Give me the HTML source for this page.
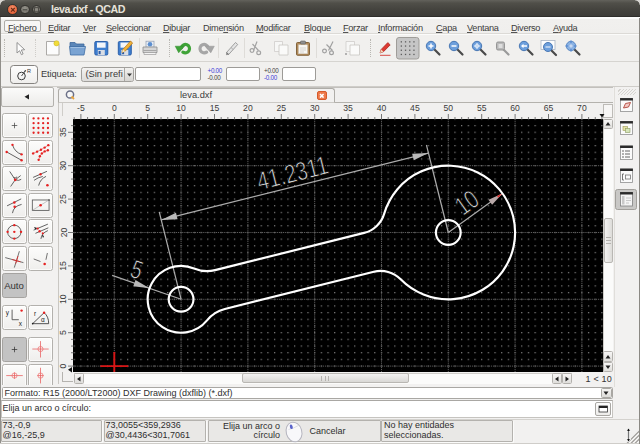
<!DOCTYPE html>
<html lang="es">
<head>
<meta charset="utf-8">
<title>leva.dxf - QCAD</title>
<style>
*{box-sizing:border-box;margin:0;padding:0}
html,body{width:640px;height:444px;overflow:hidden}
body{position:relative;background:#f2f1f0;font-family:"Liberation Sans",sans-serif;font-size:9px;color:#3c3c3c}
#cornl,#cornr{position:absolute;top:0;width:5px;height:5px}
.abs{position:absolute}
#title{left:0;top:0;width:640px;height:17px;background:linear-gradient(#63625c 0,#504f49 3px,#45443f 9px,#3d3c38 100%);border-bottom:1px solid #2f2e2b}
#title .t{position:absolute;left:51px;top:3px;font:bold 10.700px "Liberation Sans",sans-serif;color:#e6e2da;white-space:nowrap;letter-spacing:-.45px}
.wb{position:absolute;border-radius:50%;border:1px solid #33322e;margin-top:-.3px}
#menubar{left:0;top:17px;width:640px;height:17px;background:linear-gradient(#fdfdfd 0,#fbfbfa 1.5px,#f1f0ee 2.5px,#f0efed 100%);border-bottom:1px solid #dcdad6}
#menubar span{position:absolute;top:5.600px;font-size:9.200px;color:#3c3c3c;white-space:nowrap;font-family:"Liberation Sans",sans-serif;letter-spacing:-.3px}
#menubar span u{text-decoration-thickness:.6px;text-underline-offset:1.200px;text-decoration-color:#555}
#toolbar{left:0;top:34px;width:640px;height:28px;background:#f1f0ee;border-top:1px solid #fbfbfa;border-bottom:1px solid #d6d4d0}
#optbar{left:0;top:62px;width:640px;height:24.500px;background:#f1f0ee;border-bottom:1px solid #cfcdc9}
.hdl{position:absolute;width:2px;border-left:1.5px dotted #b9b7b2}
.sep{position:absolute;width:1px;background:#dedcd8}
.ico{position:absolute}
.fld{position:absolute;top:67px;height:14px;background:#fff;border:1px solid #9d9b97;border-radius:2px}
.pm{position:absolute;font-size:6.3px;line-height:6.5px;letter-spacing:-.3px;white-space:nowrap}
.tb{position:absolute;width:25px;height:25px;border:1px solid #b3b1ad;border-radius:2.5px;background:linear-gradient(#fcfcfb,#efeeec);box-shadow:inset 0 0 0 1px rgba(255,255,255,.7)}
.tb.on{background:#c3c3c3;border-color:#a5a3a0;box-shadow:none}
.tb svg{position:absolute;left:0;top:0}
#left{left:0;top:87px;width:57px;height:298px;overflow:hidden;background:#f2f1f0}
.cell{position:absolute;top:420px;height:22px;background:#e9e8e6;border:1px solid #b4b2ae;border-radius:1px;box-shadow:1px 1px 0 #fbfbfa}
.st{position:absolute;font:9px/10px "Liberation Sans",sans-serif;white-space:nowrap;color:#2e2e2e}
svg text{font-family:"Liberation Sans",sans-serif}
.rul text{font-size:8.6px;fill:#3a3a3a}
.sb{position:absolute;background:linear-gradient(#f7f6f5,#dfdedb);border:1px solid #b3b1ad;border-radius:1.500px}
.sb svg{position:absolute;left:0;top:.500px}
</style>
</head>
<body>
<!-- ===== title bar ===== -->
<div id="title" class="abs">
  <div class="wb" style="left:7.300px;top:4.200px;width:11.200px;height:11.200px;background:radial-gradient(circle at 50% 35%,#f6906a,#dd4f24)"></div>
  <div class="wb" style="left:20.200px;top:5px;width:9.600px;height:9.600px;background:radial-gradient(circle at 50% 35%,#94928a,#6c6a63)"></div>
  <div class="wb" style="left:31.700px;top:5px;width:9.600px;height:9.600px;background:radial-gradient(circle at 50% 35%,#94928a,#6c6a63)"></div>
  <svg class="abs" style="left:0;top:0" width="60" height="18" viewBox="0 0 60 18"><path d="M11.100 8l3.600 3.600m0-3.600l-3.600 3.600" stroke="#6b2a14" stroke-width="1.200" fill="none"/><path d="M22.800 9.800h4.400" stroke="#45443f" stroke-width="1.100"/><rect x="34.400" y="7.700" width="4.200" height="4.200" fill="none" stroke="#45443f" stroke-width="1"/></svg>
  <div class="t">leva.dxf - QCAD</div>
  <div id="cornl" style="left:0;background:radial-gradient(circle at 100% 100%,rgba(0,0,0,0) 4.200px,#d9d7d3 5px)"></div>
  <div id="cornr" style="right:0;background:radial-gradient(circle at 0 100%,rgba(0,0,0,0) 4.200px,#d9d7d3 5px)"></div>
</div>
<!-- ===== menu bar ===== -->
<div id="menubar" class="abs">
  <div class="abs" style="left:3.500px;top:3px;width:37px;height:12px;border:1px solid #aeaca7;border-radius:2px;background:#f7f6f5"></div>
  <span style="left:8px"><u>F</u>ichero</span>
  <span style="left:48px"><u>E</u>ditar</span>
  <span style="left:83px"><u>V</u>er</span>
  <span style="left:106px"><u>S</u>eleccionar</span>
  <span style="left:163px"><u>D</u>ibujar</span>
  <span style="left:203px">Dime<u>n</u>sión</span>
  <span style="left:256px"><u>M</u>odificar</span>
  <span style="left:304px"><u>B</u>loque</span>
  <span style="left:343px"><u>F</u>orzar</span>
  <span style="left:378px"><u>I</u>nformación</span>
  <span style="left:436px"><u>C</u>apa</span>
  <span style="left:467px"><u>V</u>entana</span>
  <span style="left:511px"><u>D</u>iverso</span>
  <span style="left:553px"><u>A</u>yuda</span>
</div>
<!-- ===== main toolbar ===== -->
<div id="toolbar" class="abs"></div>
<div class="hdl" style="left:4px;top:39px;height:18px"></div>
<div class="hdl" style="left:35px;top:39px;height:18px;opacity:.6"></div>
<div class="hdl" style="left:168.500px;top:39px;height:18px"></div>
<div class="sep" style="left:139px;top:38px;height:20px"></div>
<div class="sep" style="left:218px;top:38px;height:20px"></div>
<div class="sep" style="left:244px;top:38px;height:20px"></div>
<div class="sep" style="left:315.500px;top:38px;height:20px"></div>
<div class="hdl" style="left:370px;top:39px;height:18px"></div>
<svg class="ico" style="left:0;top:34px" width="640" height="28" viewBox="0 34 640 28">
  <!-- pointer -->
  <path d="M17 42.500v10.500l2.600-2.300 1.800 4 1.700-.8-1.800-3.900 3.400-.300z" fill="#fdfdfd" stroke="#8a8a8a" stroke-width=".9" stroke-linejoin="round"/>
  <!-- new -->
  <path d="M46.500 41.500h9.500l3 3v10.500h-12.500z" fill="#fcfcfc" stroke="#a4a29e" stroke-width=".9"/>
  <path d="M47.500 54.500h10.500" stroke="#d8d6d2" stroke-width="1"/>
  <circle cx="56.500" cy="43.300" r="2.600" fill="#f1dc3a" stroke="#c9b11b" stroke-width=".5"/>
  <!-- open -->
  <path d="M70 42.500h5l1.500 1.500h7.500v3h-14z" fill="#5b86b8" stroke="#3d689c" stroke-width=".8"/>
  <path d="M69.500 46.500h16l-1.500 8.500h-13.500z" fill="#7aa3d2" stroke="#3f6da4" stroke-width=".8"/>
  <path d="M70.500 47.500h14" stroke="#a9c6e6" stroke-width=".8"/>
  <!-- save -->
  <rect x="94.800" y="41.500" width="13" height="13.500" rx="1.200" fill="#3f7fd0" stroke="#2458a4" stroke-width=".9"/>
  <rect x="97" y="42.500" width="8.600" height="5.200" fill="#f4f6fa"/>
  <rect x="97.800" y="50" width="7" height="5" fill="#d9dde4"/><rect x="98.600" y="51" width="2" height="3.200" fill="#2a5aa6"/>
  <!-- save as -->
  <rect x="118.300" y="41.500" width="13" height="13.500" rx="1.200" fill="#3f7fd0" stroke="#2458a4" stroke-width=".9"/>
  <rect x="120.500" y="42.500" width="8.600" height="5.200" fill="#f4f6fa"/>
  <rect x="121.300" y="50" width="7" height="5" fill="#d9dde4"/><rect x="122.100" y="51" width="2" height="3.200" fill="#2a5aa6"/>
  <path d="M122 52.500l1-3.200 7.500-8.300 2.200 2-7.600 8.300z" fill="#f0b23a" stroke="#b87616" stroke-width=".7"/>
  <path d="M122 52.500l1-3.200 2.100 2.200z" fill="#f6e6c8"/>
  <!-- print -->
  <rect x="146" y="41.200" width="8" height="6" fill="#e9eef5" stroke="#8e9bb0" stroke-width=".7"/>
  <circle cx="150" cy="44.300" r="2.300" fill="#5c8fd0"/>
  <path d="M143 47h14v5.500h-14z" fill="#d6d6d6" stroke="#8b8b8b" stroke-width=".8"/>
  <path d="M144 52.500h12v2h-12z" fill="#f4f4f4" stroke="#9b9b9b" stroke-width=".7"/>
  <path d="M143.500 50.500h13" stroke="#9a9a9a" stroke-width=".8"/>
  <!-- undo -->
  <path d="M181.300 47.500a4.200 4.200 0 1 1 1.600 4.600" fill="none" stroke="#3fa338" stroke-width="3.200" stroke-linecap="round"/>
  <path d="M175.200 46.200h9.300l-5.800 6.600z" fill="#3fa338" stroke="#2f8a2a" stroke-width=".5" stroke-linejoin="round"/>
  <!-- redo -->
  <path d="M208.200 47.500a4.200 4.200 0 1 0 -1.600 4.600" fill="none" stroke="#a6a6a6" stroke-width="3.200" stroke-linecap="round"/>
  <path d="M214.300 46.200h-9.300l5.800 6.600z" fill="#a6a6a6" stroke="#949494" stroke-width=".5" stroke-linejoin="round"/>
  <!-- ruler / measure -->
  <path d="M226.500 52.500l9-10 2.200 2-9 10z" fill="#e4e4e4" stroke="#8c8c8c" stroke-width=".8"/>
  <path d="M229 54.200l-2.600 .600 .300-2.600" fill="#777" stroke="#777" stroke-width=".5"/>
  <path d="M231 47.500l2.200 2" stroke="#9a9a9a" stroke-width=".7"/>
  <!-- scissors (disabled) -->
  <g stroke="#a3a3a3" fill="none" stroke-width="1.200">
    <path d="M257 41.500l-3.500 9M252.500 44l6 6.500"/>
    <circle cx="252" cy="50.500" r="1.900"/><circle cx="258.700" cy="52.800" r="1.900"/>
  </g>
  <!-- copy (disabled) -->
  <path d="M274.500 41.500h8v10h-8z" fill="#f7f7f6" stroke="#cfcdca" stroke-width=".8"/>
  <path d="M279 45h9v10h-9z" fill="#fafaf9" stroke="#c9c7c3" stroke-width=".8"/>
  <!-- paste -->
  <rect x="296.500" y="42.500" width="13" height="12.800" rx="1" fill="#b08a5a" stroke="#7b5a31" stroke-width=".9"/>
  <rect x="298.500" y="44.800" width="9" height="9" fill="#f7f6f3" stroke="#c9c2b4" stroke-width=".5"/>
  <rect x="300.500" y="41" width="5" height="3" rx=".8" fill="#8f8f8f" stroke="#5e5e5e" stroke-width=".6"/>
  <path d="M300 48h6M300 50h6M300 52h4" stroke="#c3c0b8" stroke-width=".6"/>
  <!-- scissors 2 (disabled) -->
  <g stroke="#a0a0a0" fill="none" stroke-width="1.200">
    <path d="M333 41.500l-4.500 9M326.500 44.500l6 6"/>
    <circle cx="324.500" cy="51" r="1.900"/><circle cx="331.500" cy="52.800" r="1.900"/>
  </g>
  <!-- copy 2 (disabled) -->
  <path d="M346 41.500h8.500v10h-8.500z" fill="#f7f7f6" stroke="#cfcdca" stroke-width=".8"/>
  <path d="M350 45h9.500v10h-9.500z" fill="#fafaf9" stroke="#c9c7c3" stroke-width=".8"/>
  <circle cx="346" cy="54" r="1" fill="#9c9c9c"/>
  <!-- red pencil -->
  <path d="M380 53l1.200-3.600 6.600-6.800 2.400 2.300-6.700 6.800z" fill="#dc3a32" stroke="#a81e19" stroke-width=".7"/>
  <path d="M380 53l1.200-3.600 2.300 2.300z" fill="#f0d9b8"/>
  <path d="M380 55.300h10.500" stroke="#d64a44" stroke-width="1"/>
  <!-- grid button (pressed) -->
  <rect x="396.500" y="37.500" width="22.500" height="21.500" rx="2.500" fill="#c6c6c6" stroke="#9f9d99" stroke-width="1"/>
  <g fill="#5d5d5d">
    <rect x="400.700" y="41.200" width="1.300" height="1.300"/><rect x="404.900" y="41.200" width="1.300" height="1.300"/><rect x="409.100" y="41.200" width="1.300" height="1.300"/><rect x="413.300" y="41.200" width="1.300" height="1.300"/>
    <rect x="400.700" y="45.400" width="1.300" height="1.300"/><rect x="404.900" y="45.400" width="1.300" height="1.300"/><rect x="409.100" y="45.400" width="1.300" height="1.300"/><rect x="413.300" y="45.400" width="1.300" height="1.300"/>
    <rect x="400.700" y="49.600" width="1.300" height="1.300"/><rect x="404.900" y="49.600" width="1.300" height="1.300"/><rect x="409.100" y="49.600" width="1.300" height="1.300"/><rect x="413.300" y="49.600" width="1.300" height="1.300"/>
    <rect x="400.700" y="53.800" width="1.300" height="1.300"/><rect x="404.900" y="53.800" width="1.300" height="1.300"/><rect x="409.100" y="53.800" width="1.300" height="1.300"/><rect x="413.300" y="53.800" width="1.300" height="1.300"/>
  </g>
  <!-- zoom icons -->
  <g id="zi">
    <g><path d="M434.500 49.500l5 5" stroke="#4a4a4a" stroke-width="2.200" stroke-linecap="round"/><circle cx="431" cy="46" r="4.700" fill="#6d9fdc" stroke="#3f6fae" stroke-width=".9"/><path d="M428.500 46h5M431 43.500v5" stroke="#fff" stroke-width="1.500"/></g>
    <g><path d="M457.500 49.500l5 5" stroke="#4a4a4a" stroke-width="2.200" stroke-linecap="round"/><circle cx="454" cy="46" r="4.700" fill="#6d9fdc" stroke="#3f6fae" stroke-width=".9"/><path d="M451.500 46h5" stroke="#fff" stroke-width="1.500"/></g>
    <g><path d="M480.500 49.500l5 5" stroke="#4a4a4a" stroke-width="2.200" stroke-linecap="round"/><circle cx="477" cy="46" r="4.700" fill="#6d9fdc" stroke="#3f6fae" stroke-width=".9"/><path d="M474 46h6M477 43v6" stroke="#e8f0fa" stroke-width="1"/><circle cx="477" cy="46" r="1.800" fill="none" stroke="#e8f0fa" stroke-width=".8"/></g>
    <g><path d="M503.500 49.500l5 5" stroke="#9a9a9a" stroke-width="2.200" stroke-linecap="round"/><rect x="496.500" y="42" width="8" height="8" rx="1.500" fill="#b9b9b9" stroke="#8e8e8e" stroke-width=".9"/><rect x="498.500" y="44" width="4" height="4" fill="#dedede"/></g>
    <g><path d="M527.500 49.500l5 5" stroke="#4a4a4a" stroke-width="2.200" stroke-linecap="round"/><circle cx="524" cy="46" r="4.700" fill="#6d9fdc" stroke="#3f6fae" stroke-width=".9"/><path d="M521 46l2.500-2.200v1.400h3.500v1.600h-3.500v1.400z" fill="#fff"/></g>
    <g><rect x="541" y="40.500" width="14" height="9" fill="#fdfdfd" stroke="#a9b4c4" stroke-width=".8"/><path d="M551.500 50.500l4.500 4.500" stroke="#4a4a4a" stroke-width="2.200" stroke-linecap="round"/><circle cx="548" cy="47" r="4.500" fill="#6d9fdc" stroke="#3f6fae" stroke-width=".9"/><path d="M545.500 47h5" stroke="#dbe7f6" stroke-width="1.300"/></g>
    <g><path d="M574.500 49.500l5 5" stroke="#4a4a4a" stroke-width="2.200" stroke-linecap="round"/><circle cx="571" cy="46" r="4.700" fill="#8bb3e4" stroke="#4f7fbe" stroke-width=".9"/><path d="M565.500 46h11M571 40.500v11" stroke="#5d8fd2" stroke-width="1.500"/><path d="M568.500 46h5M571 43.500v5" stroke="#eaf1fa" stroke-width="1"/></g>
  </g>
</svg>

<!-- ===== options bar ===== -->
<div id="optbar" class="abs"></div>
<div class="abs" style="left:10px;top:65px;width:27.500px;height:19px;border:1.300px solid #858380;border-radius:3.500px;background:linear-gradient(#fdfdfd,#efeeec)"></div>
<svg class="ico" style="left:10px;top:64px" width="28" height="21" viewBox="10 64 28 21">
  <circle cx="21.500" cy="76" r="3.800" fill="none" stroke="#3a3a3a" stroke-width="1"/>
  <path d="M21.500 76l4.300-5.800" stroke="#3a3a3a" stroke-width=".9"/>
  <path d="M25.800 70.200l-2 .9 1.400 1z" fill="#3a3a3a"/>
  <text x="27" y="73" font-size="5.500" fill="#333" font-family="Liberation Sans,sans-serif">R</text>
</svg>
<div class="abs" style="left:41px;top:68.500px;font:9.300px 'Liberation Sans',sans-serif;letter-spacing:-.1px;white-space:nowrap">Etiqueta:</div>
<div class="abs" style="left:81px;top:67px;width:53px;height:14.500px;border:1px solid #a19f9b;border-radius:2.500px;background:linear-gradient(#f4f3f2,#dddcda);overflow:hidden">
  <div class="abs" style="left:3.500px;top:1px;font:9.300px 'Liberation Sans',sans-serif;white-space:nowrap;color:#3a3a3a">(Sin prefi</div>
  <div class="abs" style="left:42px;top:0;width:10px;height:13px;border-left:1px solid #a9a7a3;background:linear-gradient(#f2f1ef,#d6d5d2)"></div>
  <svg class="abs" style="left:43px;top:0" width="9" height="13" viewBox="0 0 9 13"><path d="M2 5.500h5l-2.500 3z" fill="#3a3a3a"/></svg>
</div>
<div class="fld" style="left:135px;width:66px"></div>
<div class="pm" style="left:207.500px;top:68.300px"><span style="color:#3b3bd8">+0.00</span><br><span style="color:#444">-0.00</span></div>
<div class="fld" style="left:226px;width:33.500px"></div>
<div class="pm" style="left:264px;top:68.300px"><span style="color:#444">+0.00</span><br><span style="color:#3b3bd8">-0.00</span></div>
<div class="fld" style="left:281.500px;width:34px"></div>

<!-- ===== left tool panel ===== -->
<div id="left" class="abs">
  <div class="abs" style="left:1px;top:-.500px;width:53px;height:20px;border:1px solid #b3b1ad;border-radius:2px;background:linear-gradient(#fbfbfa,#ecebe9)"></div>
  <svg class="abs" style="left:22px;top:5px" width="10" height="10" viewBox="0 0 10 10"><path d="M2.500 4.800l4.500-2.600v5.200z" fill="#222"/></svg>
  <!-- row 1 -->
  <div class="tb" style="left:1.5px;top:26px"><svg width="23" height="23" viewBox="0 0 25 25"><path d="M9.500 12.500h6M12.500 9.500v6" stroke="#444" stroke-width=".8"/></svg></div>
  <div class="tb" style="left:28px;top:26px"><svg width="23" height="23" viewBox="0 0 25 25"><g fill="#e62222"><circle cx="5" cy="4.800" r="1.250"/><circle cx="10.200" cy="4.800" r="1.250"/><circle cx="15.400" cy="4.800" r="1.250"/><circle cx="20.600" cy="4.800" r="1.250"/><circle cx="5" cy="10" r="1.250"/><circle cx="10.200" cy="10" r="1.250"/><circle cx="15.400" cy="10" r="1.250"/><circle cx="20.600" cy="10" r="1.250"/><circle cx="5" cy="15.200" r="1.250"/><circle cx="10.200" cy="15.200" r="1.250"/><circle cx="15.400" cy="15.200" r="1.250"/><circle cx="20.600" cy="15.200" r="1.250"/><circle cx="5" cy="20.400" r="1.250"/><circle cx="10.200" cy="20.400" r="1.250"/><circle cx="15.400" cy="20.400" r="1.250"/><circle cx="20.600" cy="20.400" r="1.250"/></g></svg></div>
  <!-- row 2 -->
  <div class="tb" style="left:1.5px;top:52.6px"><svg width="23" height="23" viewBox="0 0 25 25"><path d="M10.300 4.200q2.500 8 9.900 10.300M4 11.900l16.200 9.100" stroke="#444" stroke-width=".9" fill="none"/><g fill="#e62222"><circle cx="10.300" cy="4.200" r="1.300"/><circle cx="20.200" cy="14.500" r="1.300"/><circle cx="4" cy="11.900" r="1.300"/><circle cx="20.200" cy="21" r="1.300"/></g></svg></div>
  <div class="tb" style="left:28px;top:52.6px"><svg width="23" height="23" viewBox="0 0 25 25"><path d="M4.500 13.500q8-3 16.500-9M10.500 20.500q1.500-8 10-10.500" stroke="#e05050" stroke-width=".7" fill="none"/><g fill="#e62222"><circle cx="4.500" cy="13.500" r="1.300"/><circle cx="8.800" cy="11.600" r="1.300"/><circle cx="13" cy="9.500" r="1.300"/><circle cx="17" cy="7.200" r="1.300"/><circle cx="21" cy="4.500" r="1.300"/><circle cx="10.500" cy="20.500" r="1.300"/><circle cx="11.800" cy="16.500" r="1.300"/><circle cx="14" cy="13.500" r="1.300"/><circle cx="17" cy="11.300" r="1.300"/><circle cx="20.500" cy="10" r="1.300"/></g></svg></div>
  <!-- row 3 -->
  <div class="tb" style="left:1.5px;top:79.1px"><svg width="23" height="23" viewBox="0 0 25 25"><path d="M7.300 4.800l6 9.100 5.900-4.600M13.300 13.900l-5 7.300M13.300 13.900q4 1.500 6.500-.5M11.500 11.500q1.800 1 3.800-.7" stroke="#444" stroke-width=".9" fill="none"/><circle cx="13.300" cy="13.900" r="1.500" fill="#e62222"/></svg></div>
  <div class="tb" style="left:28px;top:79.1px"><svg width="23" height="23" viewBox="0 0 25 25"><path d="M4.500 11.300l15-6.600M10.500 20.200q1.500-7 8-10M5.500 14.500q4-3.200 9.500-4.200" stroke="#444" stroke-width=".9" fill="none"/><circle cx="12.500" cy="7.900" r="1.300" fill="#e62222"/><circle cx="20" cy="19.800" r="1.400" fill="#e62222"/></svg></div>
  <!-- row 4 -->
  <div class="tb" style="left:1.5px;top:105.7px"><svg width="23" height="23" viewBox="0 0 25 25"><path d="M4.400 12.900l15.400-7.600M10.300 20.800q1-7.500 9.900-9.500" stroke="#444" stroke-width=".9" fill="none"/><circle cx="12.300" cy="9.300" r="1.400" fill="#e62222"/><circle cx="12.700" cy="13.900" r="1.400" fill="#e62222"/></svg></div>
  <div class="tb" style="left:28px;top:105.7px"><svg width="23" height="23" viewBox="0 0 25 25"><rect x="3.600" y="6.500" width="18.200" height="11.300" fill="none" stroke="#555" stroke-width=".9"/><path d="M3.600 17.800l18.200-11.300" stroke="#9a9a9a" stroke-width=".6"/><circle cx="12.600" cy="12.300" r="1.400" fill="#e62222"/><circle cx="21.800" cy="6.500" r=".8" fill="#333"/></svg></div>
  <!-- row 5 -->
  <div class="tb" style="left:1.5px;top:132.2px"><svg width="23" height="23" viewBox="0 0 25 25"><circle cx="12.300" cy="12.900" r="7.300" fill="none" stroke="#444" stroke-width=".9"/><g fill="#e62222"><circle cx="12.300" cy="12.900" r="1.300"/><circle cx="12.300" cy="5.600" r="1.300"/><circle cx="12.300" cy="20.200" r="1.300"/><circle cx="5" cy="12.900" r="1.300"/><circle cx="19.600" cy="12.900" r="1.300"/></g></svg></div>
  <div class="tb" style="left:28px;top:132.2px"><svg width="23" height="23" viewBox="0 0 25 25"><path d="M5 11l15.500-6.500M7 14.500l14-6M13 20.500q.5-6 7.500-9" stroke="#444" stroke-width=".9" fill="none"/><path d="M5.500 7.500l3.500 1.200-2.200 1.500zM13.800 16l2.500 1.500-1 2z" fill="#222"/><circle cx="11.500" cy="12.300" r="1.300" fill="#e62222"/><circle cx="9.500" cy="9.300" r="1.200" fill="#e62222"/><circle cx="15" cy="14.500" r="1.200" fill="#e62222"/></svg></div>
  <!-- row 6 -->
  <div class="tb" style="left:1.5px;top:158.8px"><svg width="23" height="23" viewBox="0 0 25 25"><path d="M2.400 11.500l19.800 5.500M17.800 4.600l-5.500 17.800" stroke="#555" stroke-width=".9" fill="none"/><path d="M10 13.600l9 2.500M16.300 10l-2.500 8" stroke="#e62222" stroke-width=".9" fill="none"/></svg></div>
  <div class="tb" style="left:28px;top:158.8px"><svg width="23" height="23" viewBox="0 0 25 25"><path d="M5.100 13l7.400 2.800M20 6.500l-1.600 7.400" stroke="#555" stroke-width=".9" fill="none"/><circle cx="17" cy="18.400" r="1.400" fill="#e62222"/></svg></div>
  <!-- Auto -->
  <div class="tb on" style="left:1.5px;top:186px;height:25px"><div class="abs" style="left:0;top:6px;width:23px;text-align:center;font:9.600px 'Liberation Sans',sans-serif;color:#333">Auto</div></div>
  <!-- row 7 -->
  <div class="tb" style="left:1.5px;top:218px"><svg width="23" height="23" viewBox="0 0 25 25"><path d="M9.900 4v10.900h7.300" stroke="#444" stroke-width=".9" fill="none"/><text x="3" y="10" font-size="7" fill="#222" font-family="Liberation Sans,sans-serif">y</text><text x="17.200" y="22" font-size="7" fill="#222" font-family="Liberation Sans,sans-serif">x</text><circle cx="20.200" cy="5" r="1.300" fill="#e62222"/></svg></div>
  <div class="tb" style="left:28px;top:218px"><svg width="23" height="23" viewBox="0 0 25 25"><path d="M4 19.200l12.400-11.900M4 19.200h17.400M16.400 7.300q5 4 5 11.900" stroke="#333" stroke-width=".9" fill="none"/><text x="5.500" y="11" font-size="7" fill="#222" font-family="Liberation Sans,sans-serif">r</text><text x="13" y="17.500" font-size="7" fill="#222" font-family="DejaVu Sans,sans-serif">α</text><circle cx="16.400" cy="7.300" r="1.300" fill="#e62222"/><circle cx="4" cy="19.200" r=".9" fill="#222"/></svg></div>
  <!-- row 8 -->
  <div class="tb on" style="left:1.5px;top:250.2px"><svg width="23" height="23" viewBox="0 0 25 25"><path d="M9.500 12.500h6M12.500 9.500v6" stroke="#333" stroke-width=".8"/></svg></div>
  <div class="tb" style="left:28px;top:250.2px"><svg width="23" height="23" viewBox="0 0 25 25"><path d="M3.600 12h17.800M12.500 3.400v17.800" stroke="#e85858" stroke-width=".8"/><circle cx="12.500" cy="12" r="2.800" fill="none" stroke="#ee7070" stroke-width=".8"/></svg></div>
  <!-- row 9 -->
  <div class="tb" style="left:1.5px;top:277.4px"><svg width="23" height="23" viewBox="0 0 25 25"><path d="M3.500 11.500h18M12.500 8v7" stroke="#e85858" stroke-width=".8"/><circle cx="12.500" cy="11.500" r="2.800" fill="none" stroke="#ee7070" stroke-width=".8"/></svg></div>
  <div class="tb" style="left:28px;top:277.4px"><svg width="23" height="23" viewBox="0 0 25 25"><path d="M9 11.500h7M12.500 3v17" stroke="#e85858" stroke-width=".8"/><circle cx="12.500" cy="11.500" r="2.800" fill="none" stroke="#ee7070" stroke-width=".8"/></svg></div>
</div>

<!-- ===== tabs, rulers, canvas ===== -->
<div class="abs" style="left:57px;top:87px;width:556px;height:16px;background:#f0efee;border-top:1px solid #c2c0bc"></div>
<div class="abs" style="left:57.500px;top:102px;width:555px;height:1px;background:#b4b2ad"></div>
<div class="abs" style="left:58px;top:87.500px;width:277px;height:15.500px;background:#f2f1f0;border:1px solid #aeaca7;border-bottom:1px solid #cbc9c5;border-radius:3px 3px 0 0"></div>
<svg class="abs" style="left:64px;top:88px" width="12" height="13" viewBox="0 0 12 13"><circle cx="6" cy="6.500" r="3.600" fill="#f7f7f7" stroke="#6a6f86" stroke-width="1.500"/><path d="M7.500 8.500l2.500 2.500" stroke="#e8a33c" stroke-width="1.800"/></svg>
<div class="abs" style="left:180px;top:89.500px;font:9.300px 'Liberation Sans',sans-serif;white-space:nowrap;color:#3c3c3c">leva.dxf</div>
<div class="abs" style="left:317px;top:90.500px;width:9.500px;height:9.500px;border-radius:2px;background:#ee7a4b;border:1px solid #d65a2a"></div>
<svg class="abs" style="left:317px;top:90.500px" width="10" height="10" viewBox="0 0 10 10"><path d="M3 3l3.600 3.600M6.600 3l-3.600 3.600" stroke="#fff" stroke-width="1.500"/></svg>
<!-- ruler backgrounds -->
<div class="abs" style="left:57.500px;top:103px;width:555.500px;height:16px;background:#f1f0ef"></div>
<div class="abs" style="left:57.500px;top:103px;width:16.500px;height:269px;background:#f1f0ef"></div>
<div class="abs" style="left:57.500px;top:103px;width:1px;height:281px;background:#c9c7c3"></div>
<div class="abs" style="left:62px;top:103px;width:1px;height:13px;background:#cfcdc9"></div>
<div class="abs" style="left:62px;top:372px;width:1px;height:10px;background:#b5b3af"></div>
<div class="abs" style="left:62px;top:381px;width:11px;height:1px;background:#b5b3af"></div>
<!-- top-right corner box -->
<div class="abs" style="left:602.500px;top:103.500px;width:10px;height:14.500px;background:#f7f6f5;border:1px solid #bdbbb7"></div>
<svg class="abs" style="left:598px;top:112px" width="8" height="7" viewBox="0 0 8 7"><path d="M1.500 2h5l-2.500 3.500z" fill="#111"/></svg>
<svg class="abs" style="left:66px;top:366px" width="8" height="8" viewBox="0 0 8 8"><path d="M6 1v5.500l-4-2.700z" fill="#111"/></svg>

<div class="rul">
<svg width="530" height="16" viewBox="0 0 530 16" style="position:absolute;left:73px;top:103px">
<path d="M1.22 16v-2M7.9 16v-5M14.58 16v-2M21.26 16v-2M27.94 16v-2M34.62 16v-2M41.3 16v-5M47.98 16v-2M54.66 16v-2M61.34 16v-2M68.02 16v-2M74.7 16v-5M81.38 16v-2M88.06 16v-2M94.74 16v-2M101.42 16v-2M108.1 16v-5M114.78 16v-2M121.46 16v-2M128.14 16v-2M134.82 16v-2M141.5 16v-5M148.18 16v-2M154.86 16v-2M161.54 16v-2M168.22 16v-2M174.9 16v-5M181.58 16v-2M188.26 16v-2M194.94 16v-2M201.62 16v-2M208.3 16v-5M214.98 16v-2M221.66 16v-2M228.34 16v-2M235.02 16v-2M241.7 16v-5M248.38 16v-2M255.06 16v-2M261.74 16v-2M268.42 16v-2M275.1 16v-5M281.78 16v-2M288.46 16v-2M295.14 16v-2M301.82 16v-2M308.5 16v-5M315.18 16v-2M321.86 16v-2M328.54 16v-2M335.22 16v-2M341.9 16v-5M348.58 16v-2M355.26 16v-2M361.94 16v-2M368.62 16v-2M375.3 16v-5M381.98 16v-2M388.66 16v-2M395.34 16v-2M402.02 16v-2M408.7 16v-5M415.38 16v-2M422.06 16v-2M428.74 16v-2M435.42 16v-2M442.1 16v-5M448.78 16v-2M455.46 16v-2M462.14 16v-2M468.82 16v-2M475.5 16v-5M482.18 16v-2M488.86 16v-2M495.54 16v-2M502.22 16v-2M508.9 16v-5M515.58 16v-2M522.26 16v-2M528.94 16v-2" stroke="#777" stroke-width="1" fill="none"/>
<text x="7.9" y="8" text-anchor="middle">-5</text>
<text x="41.3" y="8" text-anchor="middle">0</text>
<text x="74.7" y="8" text-anchor="middle">5</text>
<text x="108.1" y="8" text-anchor="middle">10</text>
<text x="141.5" y="8" text-anchor="middle">15</text>
<text x="174.9" y="8" text-anchor="middle">20</text>
<text x="208.3" y="8" text-anchor="middle">25</text>
<text x="241.7" y="8" text-anchor="middle">30</text>
<text x="275.1" y="8" text-anchor="middle">35</text>
<text x="308.5" y="8" text-anchor="middle">40</text>
<text x="341.9" y="8" text-anchor="middle">45</text>
<text x="375.3" y="8" text-anchor="middle">50</text>
<text x="408.7" y="8" text-anchor="middle">55</text>
<text x="442.1" y="8" text-anchor="middle">60</text>
<text x="475.5" y="8" text-anchor="middle">65</text>
<text x="508.9" y="8" text-anchor="middle">70</text>
</svg>
<svg width="16" height="253" viewBox="0 0 16 253" style="position:absolute;left:57px;top:119px">
<path d="M16 247.1h-5M16 240.42h-2M16 233.74h-2M16 227.06h-2M16 220.38h-2M16 213.7h-5M16 207.02h-2M16 200.34h-2M16 193.66h-2M16 186.98h-2M16 180.3h-5M16 173.62h-2M16 166.94h-2M16 160.26h-2M16 153.58h-2M16 146.9h-5M16 140.22h-2M16 133.54h-2M16 126.86h-2M16 120.18h-2M16 113.5h-5M16 106.82h-2M16 100.14h-2M16 93.46h-2M16 86.78h-2M16 80.1h-5M16 73.42h-2M16 66.74h-2M16 60.06h-2M16 53.38h-2M16 46.7h-5M16 40.02h-2M16 33.34h-2M16 26.66h-2M16 19.98h-2M16 13.3h-5M16 6.62h-2" stroke="#777" stroke-width="1" fill="none"/>
<text x="9.5" y="247.1" text-anchor="middle" transform="rotate(-90 9.5 247.1)">0</text>
<text x="9.5" y="213.7" text-anchor="middle" transform="rotate(-90 9.5 213.7)">5</text>
<text x="9.5" y="180.3" text-anchor="middle" transform="rotate(-90 9.5 180.3)">10</text>
<text x="9.5" y="146.9" text-anchor="middle" transform="rotate(-90 9.5 146.9)">15</text>
<text x="9.5" y="113.5" text-anchor="middle" transform="rotate(-90 9.5 113.5)">20</text>
<text x="9.5" y="80.1" text-anchor="middle" transform="rotate(-90 9.5 80.1)">25</text>
<text x="9.5" y="46.7" text-anchor="middle" transform="rotate(-90 9.5 46.7)">30</text>
<text x="9.5" y="13.3" text-anchor="middle" transform="rotate(-90 9.5 13.3)">35</text>
</svg>
</div>
<svg id="cv" width="530" height="253" viewBox="0 0 530 253" style="position:absolute;left:73px;top:119px;background:#000">
<defs><pattern id="g" width="6.68" height="6.68" patternUnits="userSpaceOnUse" x="40.65" y="246.45"><rect x="0" y="0" width="1.25" height="1.25" fill="#7c7c7c"/></pattern></defs>
<rect width="530" height="253" fill="url(#g)"/>
<line x1="41.3" y1="0" x2="41.3" y2="253" stroke="#5c5c5c" stroke-width="1" stroke-dasharray="1.2 .9"/>
<line x1="108.1" y1="0" x2="108.1" y2="253" stroke="#5c5c5c" stroke-width="1" stroke-dasharray="1.2 .9"/>
<line x1="174.9" y1="0" x2="174.9" y2="253" stroke="#5c5c5c" stroke-width="1" stroke-dasharray="1.2 .9"/>
<line x1="241.7" y1="0" x2="241.7" y2="253" stroke="#5c5c5c" stroke-width="1" stroke-dasharray="1.2 .9"/>
<line x1="308.5" y1="0" x2="308.5" y2="253" stroke="#5c5c5c" stroke-width="1" stroke-dasharray="1.2 .9"/>
<line x1="375.3" y1="0" x2="375.3" y2="253" stroke="#5c5c5c" stroke-width="1" stroke-dasharray="1.2 .9"/>
<line x1="442.1" y1="0" x2="442.1" y2="253" stroke="#5c5c5c" stroke-width="1" stroke-dasharray="1.2 .9"/>
<line x1="508.9" y1="0" x2="508.9" y2="253" stroke="#5c5c5c" stroke-width="1" stroke-dasharray="1.2 .9"/>
<line x1="0" y1="247.1" x2="530" y2="247.1" stroke="#5c5c5c" stroke-width="1" stroke-dasharray="1.2 .9"/>
<line x1="0" y1="180.3" x2="530" y2="180.3" stroke="#5c5c5c" stroke-width="1" stroke-dasharray="1.2 .9"/>
<line x1="0" y1="113.5" x2="530" y2="113.5" stroke="#5c5c5c" stroke-width="1" stroke-dasharray="1.2 .9"/>
<line x1="0" y1="46.7" x2="530" y2="46.7" stroke="#5c5c5c" stroke-width="1" stroke-dasharray="1.2 .9"/>
<path d="M27.3 247.1 H55.3 M41.3 233.1 V261.1" stroke="#d81414" stroke-width="1.9" fill="none"/>
<g stroke="#ababab" stroke-width="1.2" fill="none">
<line x1="108.1" y1="180.3" x2="86.23" y2="92.81"/>
<line x1="375.3" y1="113.5" x2="353.43" y2="26.01"/>
<line x1="88.25" y1="100.91" x2="355.45" y2="34.11"/>
<line x1="108.1" y1="180.3" x2="39.11" y2="156.36"/>
<line x1="375.3" y1="113.5" x2="429.47" y2="74.42"/>
</g>
<polygon points="88.25,100.91 102.98,93.83 104.58,100.23" fill="#b8b8b8"/>
<polygon points="355.45,34.11 340.73,41.2 339.13,34.79" fill="#b8b8b8"/>
<polygon points="76.54,169.34 60.33,167.22 62.5,160.98" fill="#b8b8b8"/>
<polygon points="429.47,74.42 419.12,85.71 415.5,80.68" fill="#b8a8a8"/>
<polygon points="429.47,74.42 425.25,78.82 423.97,77.04" fill="#e03030"/>
<text x="221.71" y="62.81" transform="rotate(-14.04 221.71 62.81)" text-anchor="middle" font-size="26" textLength="72.5" lengthAdjust="spacingAndGlyphs" style="font-family:'Liberation Sans',sans-serif" fill="#d6d6d6" stroke="#000" stroke-width=".75">41.2311</text>
<text x="60.94" y="159.06" transform="rotate(19.14 60.94 159.06)" text-anchor="middle" font-size="26" textLength="11" lengthAdjust="spacingAndGlyphs" style="font-family:'Liberation Sans',sans-serif" fill="#d6d6d6" stroke="#000" stroke-width=".75">5</text>
<text x="398.97" y="90.76" transform="rotate(-35.8 398.97 90.76)" text-anchor="middle" font-size="26" textLength="22" lengthAdjust="spacingAndGlyphs" style="font-family:'Liberation Sans',sans-serif" fill="#d6d6d6" stroke="#000" stroke-width=".75">10</text>
<g stroke="#fff" stroke-width="2.15" fill="none">
<path d="M121.06 149.52 A33.4 33.4 0 0 0 142.12 151.14 L291.12 113.89 A28.06 28.06 0 0 0 311.23 94.61 A66.8 66.8 0 1 1 327.66 160.32 A28.06 28.06 0 0 0 300.84 152.77 L151.84 190.02 A33.4 33.4 0 0 0 134.02 201.36 A33.4 33.4 0 1 1 121.06 149.52 Z"/>
<circle cx="108.1" cy="180.3" r="12.36"/>
<circle cx="375.3" cy="113.5" r="12.36"/>
</g>
</svg>
<!-- vertical scrollbar -->
<div class="abs" style="left:603px;top:118.500px;width:10px;height:253.500px;background:#fbfbfa;border-left:1px solid #cfcdc9"></div>
<div class="sb" style="left:603px;top:118.500px;width:10px;height:10px"><svg width="8" height="8" viewBox="0 0 8 8"><path d="M1.500 5.500h5l-2.500-3.500z" fill="#222"/></svg></div>
<div class="abs" style="left:603.500px;top:218px;width:9.500px;height:45px;background:linear-gradient(90deg,#f3f2f1,#dddcd9);border:1px solid #b9b7b3;border-radius:2px"></div>
<div class="abs" style="left:606px;top:237px;width:4.500px;height:7px;border-top:1px solid #b5b3af;border-bottom:1px solid #b5b3af"><div style="margin-top:2px;height:1px;background:#b5b3af"></div></div>
<div class="sb" style="left:603px;top:351px;width:10px;height:10.500px"><svg width="8" height="8" viewBox="0 0 8 8"><path d="M1.500 5.500h5l-2.500-3.500z" fill="#222"/></svg></div>
<div class="sb" style="left:603px;top:361.500px;width:10px;height:10.500px"><svg width="8" height="8" viewBox="0 0 8 8"><path d="M1.500 2.500h5l-2.500 3.500z" fill="#222"/></svg></div>
<!-- horizontal scrollbar -->
<div class="abs" style="left:74px;top:372.500px;width:498px;height:11px;background:#fbfbfa;border-top:1px solid #cfcdc9"></div>
<div class="sb" style="left:74px;top:373px;width:10px;height:10.500px"><svg width="8" height="8" viewBox="0 0 8 8"><path d="M5.500 1.500v5l-3.500-2.500z" fill="#222"/></svg></div>
<div class="abs" style="left:242px;top:373px;width:167px;height:10px;background:linear-gradient(#f3f2f1,#d9d8d5);border:1px solid #b9b7b3;border-radius:2px"></div>
<div class="abs" style="left:321px;top:375.500px;width:8px;height:5px;border-left:1px solid #b5b3af;border-right:1px solid #b5b3af"><div style="margin-left:2.500px;width:1px;height:5px;background:#b5b3af"></div></div>
<div class="sb" style="left:551.500px;top:373px;width:10px;height:10.500px"><svg width="8" height="8" viewBox="0 0 8 8"><path d="M5.500 1.500v5l-3.500-2.500z" fill="#222"/></svg></div>
<div class="sb" style="left:561.500px;top:373px;width:10px;height:10.500px"><svg width="8" height="8" viewBox="0 0 8 8"><path d="M2.500 1.500v5l3.500-2.500z" fill="#222"/></svg></div>
<div class="abs" style="left:585.500px;top:373.500px;font:9px 'Liberation Sans',sans-serif;white-space:nowrap;color:#333;letter-spacing:.2px">1 &lt; 10</div>

<div class="abs" style="left:613px;top:87px;width:27px;height:357px;background:#f2f1f0"></div>
<div class="abs" style="left:613.500px;top:87px;width:1px;height:300px;background:#e0deda"></div>
<div class="abs" style="left:618px;top:88.500px;width:18px;height:6px;background:repeating-linear-gradient(135deg,#f2f1f0 0,#f2f1f0 1.400px,#d5d3cf 1.400px,#d5d3cf 2.200px)"></div>
<div class="abs" style="left:615px;top:188.500px;width:22px;height:21.500px;background:#c9c8c6;border:1px solid #a19f9b;border-radius:2.500px"></div>
<svg class="abs" style="left:613px;top:87px" width="27" height="140" viewBox="613 87 27 140">
  <g id="w1"><rect x="620.500" y="98.500" width="12" height="13" fill="#fbfbfb" stroke="#8f8f8f" stroke-width=".8"/><rect x="620.100" y="98.100" width="12.800" height="2.400" fill="#2b2b2b"/></g>
  <path d="M623.500 108l2-4.500 5-1-2 4.500z" fill="#f3c9c4" stroke="#b0463c" stroke-width=".9"/>
  <g><rect x="620.500" y="121.500" width="12" height="13" fill="#fbfbfb" stroke="#8f8f8f" stroke-width=".8"/><rect x="620.100" y="121.100" width="12.800" height="2.400" fill="#2b2b2b"/></g>
  <rect x="623" y="126.500" width="4.500" height="4" fill="#e7e3a7" stroke="#9c9a55" stroke-width=".6"/><rect x="625.500" y="128.500" width="4.500" height="4" fill="#d7e6b9" stroke="#8a9a63" stroke-width=".6"/>
  <g><rect x="620.500" y="146" width="12" height="13.500" fill="#fbfbfb" stroke="#8f8f8f" stroke-width=".8"/><rect x="620.100" y="145.600" width="12.800" height="2.400" fill="#2b2b2b"/></g>
  <path d="M622 151h2M625 151h5M622 154h2M625 154h5M622 157h2M625 157h5" stroke="#666" stroke-width="1"/>
  <g><rect x="620.500" y="169" width="12" height="13.500" fill="#fbfbfb" stroke="#8f8f8f" stroke-width=".8"/><rect x="620.100" y="168.600" width="12.800" height="2.400" fill="#2b2b2b"/></g>
  <path d="M622.500 174v6M622.500 174h1.500M622.500 180h1.500" stroke="#555" stroke-width=".8" fill="none"/><rect x="625.500" y="175" width="5" height="4" fill="none" stroke="#777" stroke-width=".8"/>
  <g><rect x="620.500" y="192.500" width="12" height="13.500" fill="#f4f4f4" stroke="#7f7f7f" stroke-width=".8"/><rect x="620.100" y="192.100" width="12.800" height="2.400" fill="#2b2b2b"/></g>
  <rect x="622" y="196" width="2.500" height="8.500" fill="#c9c9c9"/><path d="M626 198h5M626 200.500h5M626 203h3" stroke="#bdbdbd" stroke-width=".8"/>
</svg>

<div class="abs" style="left:0;top:385px;width:613px;height:59px;background:#f2f1f0"></div>
<!-- format combo -->
<div class="abs" style="left:1.500px;top:387px;width:611px;height:12px;background:#fff;border:1px solid #a9a7a3;border-radius:1.500px"></div>
<div class="abs" style="left:4.500px;top:388px;font:9px 'Liberation Sans',sans-serif;white-space:nowrap;color:#2e2e2e">Formato: R15 (2000/LT2000) DXF Drawing (dxflib) (*.dxf)</div>
<div class="abs" style="left:600.500px;top:388px;width:11px;height:10px;background:linear-gradient(#f6f5f4,#dcdbd8);border:1px solid #a9a7a3;border-radius:1.500px"></div>
<svg class="abs" style="left:602px;top:389px" width="8" height="8" viewBox="0 0 8 8"><path d="M1.500 2.500h5l-2.500 3.500z" fill="#222"/></svg>
<!-- command line -->
<div class="abs" style="left:1px;top:399.500px;width:611.500px;height:18.500px;background:#fff;border:1px solid #c6c4c0;border-top-color:#a9a7a3"></div>
<div class="abs" style="left:2.500px;top:403px;font:9px 'Liberation Sans',sans-serif;white-space:nowrap;color:#2e2e2e">Elija un arco o círculo:</div>
<div class="abs" style="left:594.500px;top:402px;width:16px;height:14px;background:linear-gradient(#fdfdfd,#eeedeb);border:1px solid #a9a7a3;border-radius:2px"></div>
<svg class="abs" style="left:594.500px;top:402px" width="16" height="14" viewBox="0 0 16 14"><rect x="4" y="4" width="8.500" height="6" fill="#fff" stroke="#333" stroke-width=".8"/><rect x="4" y="4" width="8.500" height="2" fill="#222"/></svg>
<!-- status bar -->
<div class="abs" style="left:0;top:419px;width:640px;height:1px;background:#d4d2ce"></div>
<div class="cell" style="left:0.500px;width:101.500px"></div>
<div class="st" style="left:2.500px;top:420.300px">73,-0,9</div>
<div class="st" style="left:2.500px;top:430.400px">@16,-25,9</div>
<div class="cell" style="left:103.500px;width:102.500px"></div>
<div class="st" style="left:105.500px;top:420.300px">73,0055&lt;359,2936</div>
<div class="st" style="left:105.500px;top:430.400px">@30,4436&lt;301,7061</div>
<div class="cell" style="left:208px;width:172.500px"></div>
<div class="st" style="left:208px;width:72px;text-align:right;top:420.800px">Elija un arco o</div>
<div class="st" style="left:208px;width:72px;text-align:right;top:430.400px">círculo</div>
<div class="st" style="left:309.500px;top:425.500px">Cancelar</div>
<svg class="abs" style="left:283px;top:419.500px" width="22" height="24" viewBox="0 0 22 24"><ellipse cx="11" cy="12" rx="7.800" ry="10" fill="#f8f8fa" stroke="#b4b4be" stroke-width="1" transform="rotate(-16 11 12)"/><path d="M5.500 9.500q5-1 9.500-3.800M8 4.500l1.500 4.500" stroke="#d0d0d8" stroke-width=".7" fill="none"/><ellipse cx="8.300" cy="6.800" rx="1.400" ry="2.300" fill="#5a64cc" transform="rotate(-16 8.300 6.800)"/></svg>
<div class="cell" style="left:381px;width:131.500px"></div>
<div class="st" style="left:384px;top:420.400px">No hay entidades</div>
<div class="st" style="left:384px;top:429.600px">seleccionadas.</div>
<!-- resize grip -->
<svg class="abs" style="left:626px;top:430px" width="14" height="14" viewBox="0 0 14 14"><path d="M13.500 1l-12.500 12.500M13.500 5l-8.500 8.500M13.500 9l-4.500 4.500" stroke="#9b9995" stroke-width="1.300"/><path d="M13.500 2.300l-11.200 11.200M13.500 6.300l-7.200 7.200M13.500 10.300l-3.200 3.200" stroke="#fff" stroke-width=".9"/></svg>
<!-- mouse cursor (resize) -->
<svg class="abs" style="left:623px;top:426px" width="12" height="18" viewBox="0 0 12 18"><path d="M5.500 2l-2.300 3h1.600v8h-1.600l2.300 3 2.300-3h-1.600v-8h1.600z" fill="#111" stroke="#fff" stroke-width=".8"/></svg>
<!-- window edges -->
<div class="abs" style="left:0;top:17px;width:1px;height:427px;background:#918f8a"></div>
<div class="abs" style="left:0;top:443px;width:640px;height:1px;background:#cfcdc9"></div>
<div class="abs" style="left:639px;top:18px;width:1px;height:426px;background:#8b8984"></div>

</body>
</html>
